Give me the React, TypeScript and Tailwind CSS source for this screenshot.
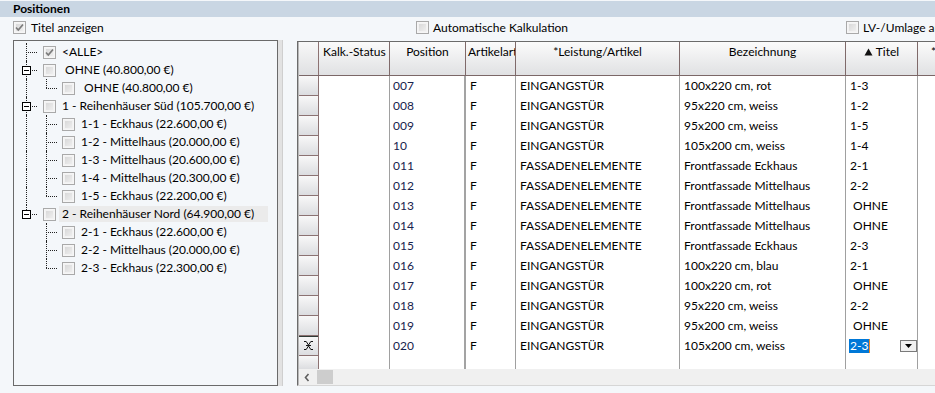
import React from "react";

type Kind = "tee" | "end" | "pass" | "none";

type TreeItem = {
  level: 0 | 1;
  label: string;
  a: Kind;
  b?: Kind;
  box?: boolean;
  checked?: boolean;
  hover?: boolean;
};

const tree: TreeItem[] = [
  { level: 0, label: "<ALLE>", a: "tee", checked: true },
  { level: 0, label: " OHNE (40.800,00 €)", a: "tee", box: true },
  { level: 1, label: " OHNE (40.800,00 €)", a: "pass", b: "end" },
  { level: 0, label: "1 - Reihenhäuser Süd (105.700,00 €)", a: "tee", box: true },
  { level: 1, label: "1-1 - Eckhaus (22.600,00 €)", a: "pass", b: "tee" },
  { level: 1, label: "1-2 - Mittelhaus (20.000,00 €)", a: "pass", b: "tee" },
  { level: 1, label: "1-3 - Mittelhaus (20.600,00 €)", a: "pass", b: "tee" },
  { level: 1, label: "1-4 - Mittelhaus (20.300,00 €)", a: "pass", b: "tee" },
  { level: 1, label: "1-5 - Eckhaus (22.200,00 €)", a: "pass", b: "end" },
  { level: 0, label: "2 - Reihenhäuser Nord (64.900,00 €)", a: "end", box: true, hover: true },
  { level: 1, label: "2-1 - Eckhaus (22.600,00 €)", a: "none", b: "tee" },
  { level: 1, label: "2-2 - Mittelhaus (20.000,00 €)", a: "none", b: "tee" },
  { level: 1, label: "2-3 - Eckhaus (22.300,00 €)", a: "none", b: "end" },
];

const positions = [
  ["007", "F", "EINGANGSTÜR", "100x220 cm, rot", "1-3"],
  ["008", "F", "EINGANGSTÜR", "95x220 cm, weiss", "1-2"],
  ["009", "F", "EINGANGSTÜR", "95x200 cm, weiss", "1-5"],
  ["10", "F", "EINGANGSTÜR", "105x200 cm, weiss", "1-4"],
  ["011", "F", "FASSADENELEMENTE", "Frontfassade Eckhaus", "2-1"],
  ["012", "F", "FASSADENELEMENTE", "Frontfassade Mittelhaus", "2-2"],
  ["013", "F", "FASSADENELEMENTE", "Frontfassade Mittelhaus", " OHNE"],
  ["014", "F", "FASSADENELEMENTE", "Frontfassade Mittelhaus", " OHNE"],
  ["015", "F", "FASSADENELEMENTE", "Frontfassade Eckhaus", "2-3"],
  ["016", "F", "EINGANGSTÜR", "100x220 cm, blau", "2-1"],
  ["017", "F", "EINGANGSTÜR", "100x220 cm, rot", " OHNE"],
  ["018", "F", "EINGANGSTÜR", "95x220 cm, weiss", "2-2"],
  ["019", "F", "EINGANGSTÜR", "95x200 cm, weiss", " OHNE"],
  ["020", "F", "EINGANGSTÜR", "105x200 cm, weiss", "2-3"],
];

function Check({ checked }: { checked?: boolean }) {
  return (
    <span className="relative flex h-[13px] w-[13px] shrink-0 items-center justify-center border border-[#a9a9a9] bg-[#f6f6f6]">
      <span className="absolute inset-[1px] border border-[#f2f2f2] bg-linear-to-br from-[#d9d9d9] to-[#eeeeee]" />
      {checked && (
        <svg width="11" height="11" viewBox="0 0 11 11" className="relative">
          <polyline points="2,5.5 4.3,8 9,2.5" fill="none" stroke="#7b7b7b" strokeWidth="1.7" />
        </svg>
      )}
    </span>
  );
}

function Lines({ kind, left, len, box }: { kind: Kind; left: number; len: number; box?: boolean }) {
  if (kind === "none") return null;
  return (
    <>
      <span
        className={`absolute top-0 border-l border-dotted border-[#222] ${kind === "end" ? "h-[9px]" : "bottom-0"}`}
        style={{ left }}
      />
      {kind !== "pass" && (
        <span className="absolute top-[9px] border-t border-dotted border-[#222]" style={{ left, width: len }} />
      )}
      {box && (
        <span
          className="absolute top-[5px] flex h-[9px] w-[9px] items-center justify-center border border-black bg-white"
          style={{ left: left - 4 }}
        >
          <span className="h-px w-[5px] bg-black" />
        </span>
      )}
    </>
  );
}

function TreeRow({ item }: { item: TreeItem }) {
  return (
    <div className="flex h-[18px] items-center">
      <div className="relative h-full w-[29px] shrink-0">
        <Lines kind={item.a} left={12} len={11} box={item.box} />
      </div>
      {item.level === 1 && (
        <div className="relative h-full w-[19px] shrink-0">
          <Lines kind={item.b ?? "none"} left={3} len={11} />
        </div>
      )}
      <Check checked={item.checked} />
      <span
        className={`ml-[3px] whitespace-pre pl-[3px] leading-[16px] ${item.hover ? "bg-[#ebebeb] pr-[14px]" : "pr-[3px]"}`}
      >
        {item.label}
      </span>
    </div>
  );
}

const cols = [
  { w: "w-[71px]", label: "Kalk.-Status", align: "text-left px-[4px]", body: "border-r border-[#a0a0a0]" },
  { w: "w-[76px]", label: "Position", align: "text-center", body: "border-r-[2px] border-[#a3a3a3]" },
  { w: "w-[50px]", label: "Artikelart", align: "text-left pl-[2px]", body: "border-r border-[#a0a0a0]" },
  { w: "w-[164px]", label: "*Leistung/Artikel", align: "text-center", body: "border-r border-[#a0a0a0]" },
  { w: "w-[166px]", label: "Bezeichnung", align: "text-center", body: "border-r border-[#a0a0a0]" },
  { w: "w-[72px]", label: "Titel", align: "text-center", body: "border-r border-[#a0a0a0]" },
  { w: "w-[60px]", label: "*", align: "text-left pl-[13px]", body: "" },
];

function RowHead({ current, last }: { current?: boolean; last?: boolean }) {
  return (
    <div
      className={`flex w-[20px] shrink-0 items-center justify-center border-r border-[#8c7272] bg-linear-to-b from-[#f8f8f8] to-[#dcdde0] ${
        last ? "" : "border-b"
      } ${current ? "shadow-[inset_0_1px_0_#2f3a35]" : ""}`}
    >
      {current && (
        <svg width="11" height="9" viewBox="0 0 11 9">
          <path
            d="M1 0.5h2.2l2.3 3.5 2.3-3.5H10M1 8.5h2.2l2.3-3.5 2.3 3.5H10M3 4.5h5"
            fill="none"
            stroke="#111"
            strokeWidth="1"
          />
        </svg>
      )}
    </div>
  );
}

export default function App() {
  return (
    <div className="h-[393px] w-[935px] overflow-hidden bg-[#f4f7fa] font-[Lato,sans-serif] text-[12px] text-black">
      <div className="mt-[1px] h-[16px] bg-[#c9d6e3] pl-[13px] font-bold leading-[16px]">Positionen</div>

      <div className="flex h-[23px] items-start overflow-hidden pt-[4px] leading-[13px]">
        <label className="ml-[13px] flex w-[403px] shrink-0 items-center gap-[5px]">
          <Check checked />
          <span>Titel anzeigen</span>
        </label>
        <label className="flex w-[430px] shrink-0 items-center gap-[4px]">
          <Check />
          <span>Automatische Kalkulation</span>
        </label>
        <label className="flex shrink-0 items-center gap-[4px] whitespace-nowrap">
          <Check />
          <span>LV-/Umlage anzeigen</span>
        </label>
      </div>

      <div className="flex">
        <div className="ml-[13px] h-[346px] w-[265px] shrink-0 border border-[#6a6a6a] pt-[2px]">
          {tree.map((item, i) => (
            <TreeRow key={i} item={item} />
          ))}
        </div>
        <div className="h-[346px] w-[5px] shrink-0 border-r border-[#cfcfcf] bg-[#e2e2e2]" />

        <div className="ml-[14px] mt-[1px] flex h-[345px] flex-1 flex-col overflow-hidden border-b border-l border-t border-b-[#d6d6d6] border-l-[#6b6b6b] border-t-[#6b6b6b] bg-white">
          <div className="flex flex-1 flex-col border-l border-[#b8b8b8]">
            <div className="flex h-[34px] shrink-0 border-b border-[#7b6767]">
              <div className="w-[20px] shrink-0 border-r border-[#8c7272] bg-linear-to-b from-[#f8f8f8] to-[#dfe0e2]" />
              {cols.map((c) => (
                <div
                  key={c.label}
                  className={`${c.w} ${c.align} shrink-0 overflow-hidden whitespace-nowrap border-r border-[#7f6a6a] bg-linear-to-b from-[#fbfbfb] to-[#e0e1e3] pt-[2px] leading-[16px]`}
                >
                  {c.label === "Titel" ? (
                    <span className="inline-flex items-center gap-[3px]">
                      <svg width="9" height="8" viewBox="0 0 9 8">
                        <path d="M4.5 0.5L8.5 7.5H0.5Z" fill="#111" />
                      </svg>
                      Titel
                    </span>
                  ) : (
                    c.label
                  )}
                </div>
              ))}
            </div>

            {positions.map((r, i) => {
              const current = i === positions.length - 1;
              return (
                <div key={r[0]} className="flex h-[20px] shrink-0 leading-[20px]">
                  <RowHead current={current} />
                  <div className={`${cols[0].w} ${cols[0].body} shrink-0`} />
                  <div className={`${cols[1].w} ${cols[1].body} shrink-0 px-[3px] text-[#17224d]`}>{r[0]}</div>
                  <div className={`${cols[2].w} ${cols[2].body} shrink-0 px-[4px]`}>{r[1]}</div>
                  <div className={`${cols[3].w} ${cols[3].body} shrink-0 overflow-hidden whitespace-nowrap px-[4px]`}>
                    {r[2]}
                  </div>
                  <div className={`${cols[4].w} ${cols[4].body} shrink-0 overflow-hidden whitespace-nowrap px-[4px]`}>
                    {r[3]}
                  </div>
                  {current ? (
                    <div className={`${cols[5].w} ${cols[5].body} flex shrink-0 items-center pl-[3px]`}>
                      <span className="bg-[#0078d7] px-px leading-[14px] text-white">{r[4]}</span>
                      <span className="h-[14px] w-px bg-[#f08a24]" />
                      <span className="ml-auto flex h-[12px] w-[17px] items-center justify-center border border-[#7a7a7a] bg-[#f0f0f0]">
                        <svg width="7" height="4" viewBox="0 0 7 4">
                          <path d="M0 0H7L3.5 4Z" fill="#000" />
                        </svg>
                      </span>
                    </div>
                  ) : (
                    <div className={`${cols[5].w} ${cols[5].body} shrink-0 whitespace-pre px-[4px]`}>{r[4]}</div>
                  )}
                  <div className={`${cols[6].w} shrink-0`} />
                </div>
              );
            })}

            <div className="flex flex-1">
              <RowHead last />
              {cols.map((c) => (
                <div key={c.label} className={`${c.w} ${c.body} shrink-0`} />
              ))}
            </div>

            <div className="flex h-[16px] shrink-0 items-center bg-[#f0f0f0]">
              <svg width="8" height="9" viewBox="0 0 8 9" className="ml-[4px]">
                <path d="M5.5 1L2.5 4.5L5.5 8" fill="none" stroke="#5f5f5f" strokeWidth="1.6" />
              </svg>
              <div className="ml-[6px] h-[14px] w-[16px] bg-[#cdcdcd]" />
            </div>
          </div>
        </div>
      </div>
    </div>
  );
}
